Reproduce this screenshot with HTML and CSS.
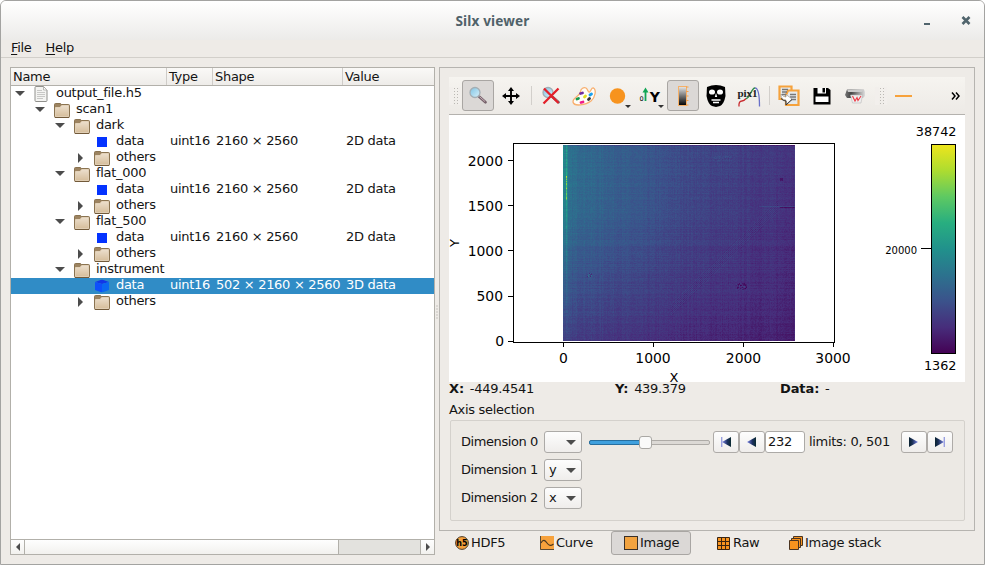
FILE: index.html
```html
<!DOCTYPE html>
<html lang="en">
<head>
<meta charset="utf-8">
<title>Silx viewer</title>
<link rel="stylesheet" href="styles.css">
</head>
<body>
<svg class="defs" width="0" height="0" aria-hidden="true">
  <defs>
    <linearGradient id="gFolder" x1="0" y1="0" x2="0" y2="1"><stop offset="0" stop-color="#ecdfcd"/><stop offset="1" stop-color="#d6be9c"/></linearGradient>
    <linearGradient id="gBar" x1="0" y1="0" x2="0" y2="1"><stop offset="0" stop-color="#e8e8e8"/><stop offset="1" stop-color="#000"/></linearGradient>
    <linearGradient id="gLens" x1="0" y1="0" x2="1" y2="1"><stop offset="0" stop-color="#7fc4e4"/><stop offset="1" stop-color="#d8f0fa"/></linearGradient>
    <linearGradient id="gPrint" x1="0" y1="0" x2="1" y2="0"><stop offset="0" stop-color="#777"/><stop offset=".3" stop-color="#444"/><stop offset="1" stop-color="#ddd"/></linearGradient>
    <linearGradient id="gTri" x1="0" y1="0" x2="1" y2="0"><stop offset="0" stop-color="#0a2230"/><stop offset=".35" stop-color="#1a2f55"/><stop offset="1" stop-color="#7a84ea"/></linearGradient>
    <linearGradient id="gTri2" x1="1" y1="0" x2="0" y2="0"><stop offset="0" stop-color="#0a2a30"/><stop offset=".4" stop-color="#1c3160"/><stop offset="1" stop-color="#8088ec"/></linearGradient>
    <linearGradient id="gViridis" x1="0" y1="0" x2="0" y2="1">
      <stop offset="0" stop-color="#efe51c"/><stop offset=".125" stop-color="#addc30"/><stop offset=".25" stop-color="#5ec962"/><stop offset=".375" stop-color="#28ae80"/><stop offset=".5" stop-color="#21918c"/><stop offset=".625" stop-color="#2c728e"/><stop offset=".75" stop-color="#3b528b"/><stop offset=".875" stop-color="#472d7b"/><stop offset="1" stop-color="#440154"/>
    </linearGradient>
    <symbol id="folder" viewBox="0 0 16 16">
      <path d="M.5 13.500V1.500Q.5.500 1.500.500H6Q7 .500 7.200 1.500H14.500Q15.500 1.500 15.500 2.500V13.500Q15.500 14.500 14.500 14.500H1.500Q.5 14.500.5 13.500Z" fill="#9c8360" stroke="#8a7350"/>
      <path d="M1.500 13.500V4.500H6L7.700 2.500H14.500V13.500Z" fill="url(#gFolder)" stroke="#ead9c2" stroke-width=".8"/>
      <path d="M1 14.500H15" stroke="#725a3a"/>
    </symbol>
    <symbol id="file" viewBox="0 0 14 16">
      <path d="M1 1.500Q1 .500 2 .500H9.500L13 4V14.500Q13 15.500 12 15.500H2Q1 15.500 1 14.500Z" fill="#f4f4f2" stroke="#90908c"/>
      <path d="M9.500 1V4H13" fill="#fff" stroke="#a8a8a4" stroke-width=".8"/>
      <path d="M3 4.500H8M3 6.500H11M3 8.500H11M3 10.500H11M3 12.500H9" stroke="#c8c8c6"/>
    </symbol>
    <symbol id="cube" viewBox="0 0 14 13">
      <path d="M0 2.500L7 0L14 2.500L7 4.500Z" fill="#1236e8"/><path d="M0 2.500L7 4.500V13L0 10.500Z" fill="#0e50fa"/><path d="M14 2.500L7 4.500V13L14 10.500Z" fill="#0a68f2"/>
    </symbol>
    <symbol id="lens" viewBox="0 0 20 20">
      <path d="M11 10.500L17.500 16.200" stroke="#77636c" stroke-width="2.800" stroke-linecap="round"/><path d="M11.500 10.700L17 15.500" stroke="#c5aeb6" stroke-width="1"/>
      <circle cx="7" cy="6.500" r="5" fill="url(#gLens)" stroke="#a4aeb4" stroke-width="1.300"/>
    </symbol>
    <symbol id="prev" viewBox="0 0 9 10"><path d="M9 0V10L0 5Z" fill="url(#gTri2)"/></symbol>
    <symbol id="next" viewBox="0 0 9 10"><path d="M0 0V10L9 5Z" fill="url(#gTri)"/></symbol>
  </defs>
</svg>
<div class="window">
  <header class="titlebar">
    <span class="title">Silx viewer</span>
    <svg class="winbtns" width="50" height="12" viewBox="0 0 50 12"><path d="M2 9H8" stroke="#50646c" stroke-width="2"/><path d="M40.500 2L47.500 9M47.500 2L40.500 9" stroke="#50646c" stroke-width="2.600"/></svg>
  </header>
  <nav class="menu"><span><u>F</u>ile</span><span><u>H</u>elp</span></nav>
  <main class="main">
    <section class="tree">
      <div class="cols head"><span>Name</span><span>Type</span><span>Shape</span><span>Value</span></div>
      <div class="rows">
        <div class="cols"><span class="name l0"><i class="down"></i><svg class="ico"><use href="#file" width="14" height="16" x="0"/></svg><b>output_file.h5</b></span></div>
        <div class="cols"><span class="name l1"><i class="down"></i><svg class="ico"><use href="#folder" width="16" height="16" y="1"/></svg><b>scan1</b></span></div>
        <div class="cols"><span class="name l2"><i class="down"></i><svg class="ico"><use href="#folder" width="16" height="16" y="1"/></svg><b>dark</b></span></div>
        <div class="cols"><span class="name l3"><i></i><svg class="ico"><rect x="3" y="3" width="10" height="10" fill="#0433ff"/></svg><b>data</b></span><span>uint16</span><span>2160 × 2560</span><span>2D data</span></div>
        <div class="cols"><span class="name l3"><i class="right"></i><svg class="ico"><use href="#folder" width="16" height="16" y="1"/></svg><b>others</b></span></div>
        <div class="cols"><span class="name l2"><i class="down"></i><svg class="ico"><use href="#folder" width="16" height="16" y="1"/></svg><b>flat_000</b></span></div>
        <div class="cols"><span class="name l3"><i></i><svg class="ico"><rect x="3" y="3" width="10" height="10" fill="#0433ff"/></svg><b>data</b></span><span>uint16</span><span>2160 × 2560</span><span>2D data</span></div>
        <div class="cols"><span class="name l3"><i class="right"></i><svg class="ico"><use href="#folder" width="16" height="16" y="1"/></svg><b>others</b></span></div>
        <div class="cols"><span class="name l2"><i class="down"></i><svg class="ico"><use href="#folder" width="16" height="16" y="1"/></svg><b>flat_500</b></span></div>
        <div class="cols"><span class="name l3"><i></i><svg class="ico"><rect x="3" y="3" width="10" height="10" fill="#0433ff"/></svg><b>data</b></span><span>uint16</span><span>2160 × 2560</span><span>2D data</span></div>
        <div class="cols"><span class="name l3"><i class="right"></i><svg class="ico"><use href="#folder" width="16" height="16" y="1"/></svg><b>others</b></span></div>
        <div class="cols"><span class="name l2"><i class="down"></i><svg class="ico"><use href="#folder" width="16" height="16" y="1"/></svg><b>instrument</b></span></div>
        <div class="cols selected"><span class="name l3"><i></i><svg class="ico"><use href="#cube" width="14" height="13" x="1" y="1.500"/></svg><b>data</b></span><span>uint16</span><span>502 × 2160 × 2560</span><span>3D data</span></div>
        <div class="cols"><span class="name l3"><i class="right"></i><svg class="ico"><use href="#folder" width="16" height="16" y="1"/></svg><b>others</b></span></div>
      </div>
      <div class="scrollbar"><span class="sbtn"><i class="left"></i></span><span class="thumb"></span><span class="track"></span><span class="sbtn"><i class="right"></i></span></div>
    </section>
    <div class="splitter"></div>
    <section class="side">
      <div class="panel">
        <div class="toolbar">
          <span class="handle"></span>
          <span class="tool on"><svg width="20" height="20"><use href="#lens"/></svg></span>
          <span class="tool"><svg width="20" height="20" viewBox="0 0 20 20"><path d="M10 3V17M3 10H17" stroke="#000" stroke-width="1.900"/><path d="M10 1L13 5H7ZM10 19L13 15H7ZM1 10L5 7V13ZM19 10L15 7V13Z"/></svg></span>
          <span class="sep"></span>
          <span class="tool"><svg width="20" height="20" viewBox="0 0 20 20"><use href="#lens"/><path d="M3 2.500L17.500 17M17.500 2.500L2.500 17.500" stroke="#e3202a" stroke-width="2.300"/></svg></span>
          <span class="tool"><svg width="26" height="22" viewBox="0 0 26 22"><path d="M9.500 7C9.500 3.500 13 2 15 3C17.500 4.500 16.500 7.500 18.500 7C20.500 6 20 2.500 22.500 3C25.500 5 24.500 12 20 16C15 20 3 22 2 17C1.500 12.500 8 12 9.500 7Z" fill="#fffdf8" stroke="#f8b070" stroke-width="1.300"/><g stroke-width="2.800" stroke-linecap="round"><path d="M9.500 8.500L11.500 8" stroke="#6e2da0"/><path d="M13.500 12L14.500 11" stroke="#e0e020"/><path d="M19 10L20.500 9" stroke="#1aa0ee"/><path d="M6 14L7.500 13.500" stroke="#169b50"/><path d="M17.500 14.500L18.500 13.500" stroke="#333"/><path d="M10 17.500L12 17" stroke="#ee1c8c"/></g></svg></span>
          <span class="tool drop"><svg width="20" height="20"><circle cx="10.500" cy="10" r="7.700" fill="#f7931e"/></svg></span>
          <span class="tool drop"><svg width="26" height="20" viewBox="0 0 26 20"><path d="M8.500 15V5" stroke="#12a555" stroke-width="1.800"/><path d="M5.500 6.500L8.500 1.500L11.500 6.500Z" fill="#12a555"/><text x="2.500" y="15" font-size="6.500">0</text><text x="12.700" y="15.500" font-size="14" font-weight="bold">Y</text></svg></span>
          <span class="tool on"><svg width="20" height="24" viewBox="0 0 20 24"><rect x="5.500" y="2.500" width="8" height="19" fill="url(#gBar)" stroke="#f5b068"/><path d="M13 3H15.500M13 7.500H15.500M13 12H15.500M13 16.500H15.500M13 21H15.500" stroke="#f5a04a"/></svg></span>
          <span class="tool"><svg width="22" height="24" viewBox="0 0 22 24"><path d="M2 3Q11-1 20 3L20.500 12Q19 20 15 22L11 23L7 22Q3 20 1.500 12Z"/><g fill="#fff"><ellipse cx="7" cy="8" rx="3" ry="2.600"/><ellipse cx="15" cy="8" rx="3" ry="2.600"/><path d="M9.800 13L11 9L12.200 13Z"/></g><path d="M6.500 16H15.500M8 18.500H14" stroke="#fff" stroke-width="1.500"/></svg></span>
          <span class="tool"><svg width="26" height="24" viewBox="0 0 26 24"><g fill="none" stroke-width="1.300"><path d="M3 22.500Q2.500 17 6 17Q8 17 10 14.500" stroke="#c8282c"/><path d="M10 14.500C14 15 15 4 19 4" stroke="#2c8a48"/><path d="M19 4C23 4 23.500 14 23.500 22.500" stroke="#6870c8"/></g><text class="serif" x="1.500" y="13" font-size="11" font-weight="bold" fill="#222" textLength="20">pix1</text></svg></span>
          <span class="sep"></span>
          <span class="tool"><svg width="22" height="22" viewBox="0 0 22 22"><g fill="#e6eaec" stroke="#f5a23c" stroke-width="2.200"><path d="M1.500 1.500H13.500V14H1.500Z"/><path d="M10 5.500H20.500V20H8V10Z"/></g><path d="M4 4.500H10M4 7H9M4 9.500H8M12 9.500H18M12 12H18M13 14.500H18" stroke="#777" stroke-width="1.300"/><path d="M3 9Q3 15 8 15V19.500L14 14L8 9.500V12Q5 12 3 9Z" fill="#fff" stroke="#888" stroke-width=".6"/><path d="M3 13.500Q5 16 8 16V20L14 14.500" fill="none" stroke="#333"/></svg></span>
          <span class="tool"><svg width="18" height="18" viewBox="0 0 18 18"><path d="M.5 1H15L17.500 3V17.500H.5Z"/><path d="M4.500 1H13V6.500H4.500ZM2.500 9.500H15.500V15H2.500Z" fill="#fff"/><path d="M9.500 1H12V5.500H9.500Z"/></svg></span>
          <span class="tool"><svg width="20" height="18" viewBox="0 0 20 18"><path d="M2 2.500H19L20 5V9L18 11H2L0 8Z" fill="url(#gPrint)"/><path d="M2 2.500H19L17 5H3Z" fill="#ccc"/><path d="M5.500 8H17.500L16 16H7.500Z" fill="#eee" stroke="#bbb" stroke-width=".6"/><path d="M7.500 9L10 14L12 10.500L13 13.500L16 9" fill="none" stroke="#ee3844" stroke-width="1.100"/></svg></span>
          <span class="handle second"></span>
          <span class="tool"><svg width="18" height="4"><rect y="1" width="17" height="2" fill="#f7a23c"/></svg></span>
          <svg class="more" width="10" height="8" viewBox="0 0 10 8"><path d="M1 .5L4 4L1 7.500M5 .5L8 4L5 7.500" fill="none" stroke="#000" stroke-width="1.500"/></svg>
        </div>
        <div class="plot">
          <svg class="axes" width="516" height="267" viewBox="449 115 516 267">
            <rect x="513.500" y="143.500" width="321" height="199" fill="none" stroke="#000"/>
            <path d="M508 160.500H513M508 205.500H513M508 250.500H513M508 296.500H513M508 341.500H513M563.500 343V347M653.500 343V347M743.500 343V347M833.500 343V347" stroke="#000"/>
            <g class="tick" text-anchor="end"><text x="503" y="166">2000</text><text x="503" y="211">1500</text><text x="503" y="256">1000</text><text x="503" y="301">500</text><text x="504" y="346">0</text></g>
            <g class="tick" text-anchor="middle"><text x="563.500" y="363">0</text><text x="653" y="363">1000</text><text x="743.500" y="363">2000</text><text x="833" y="363">3000</text><text x="674" y="381.700" font-size="13">X</text><text transform="translate(459 243) rotate(-90)" font-size="13">Y</text></g>
            <rect x="931.500" y="144.500" width="24" height="209" fill="url(#gViridis)" stroke="#000"/>
            <path d="M921 248.500H931" stroke="#000"/>
            <g class="clabel" text-anchor="end"><text x="956.500" y="136">38742</text><text x="956.500" y="370">1362</text></g>
            <text class="small" x="917" y="254" text-anchor="end">20000</text>
          </svg>
          <canvas class="heat" id="heat" width="232" height="196"></canvas>
        </div>
        <div class="stats"><span><strong>X:</strong> -449.4541</span><span><strong>Y:</strong> 439.379</span><span><strong>Data:</strong> -</span></div>
        <div class="axis-title">Axis selection</div>
        <div class="group">
          <div class="dim"><label>Dimension 0</label><span class="combo"><em></em><i class="down"></i></span>
            <span class="slider"><span class="fill"></span><span class="knob"></span></span>
            <span class="nav first"><svg width="10" height="10"><path d="M.7 0V10" stroke="#9aa0e0" stroke-width="1.400"/><use href="#prev" x="1" width="9" height="10"/></svg></span><span class="nav"><svg width="10" height="10"><use href="#prev" width="9" height="10"/></svg></span><span class="num">232</span><span class="limits">limits: 0, 501</span><span class="nav"><svg width="10" height="10"><use href="#next" width="9" height="10"/></svg></span><span class="nav"><svg width="10" height="10"><use href="#next" width="9" height="10"/><path d="M9.300 0V10" stroke="#9aa0e0" stroke-width="1.400"/></svg></span>
          </div>
          <div class="dim"><label>Dimension 1</label><span class="combo"><em>y</em><i class="down"></i></span></div>
          <div class="dim"><label>Dimension 2</label><span class="combo"><em>x</em><i class="down"></i></span></div>
        </div>
      </div>
      <div class="tabs">
        <span class="tab t1"><svg width="14" height="14" viewBox="0 0 14 14"><circle cx="7" cy="7" r="6.400" fill="#f5a03a" stroke="#4a3c2c"/><text x="7" y="10" font-size="8" font-weight="bold" text-anchor="middle">h5</text></svg>HDF5</span>
        <span class="tab t2"><svg width="14" height="14" viewBox="0 0 14 14"><rect width="14" height="14" fill="#f7a23c"/><path d="M.5 0V13.500H14" fill="none" stroke="#5a4a34"/><path d="M1 7C3 3 5 4 7 7S11 10 13.500 8" fill="none" stroke="#4a3820" stroke-width="1.100"/></svg>Curve</span>
        <span class="tab t3"><svg width="14" height="14" viewBox="0 0 14 14"><rect x=".5" y=".5" width="13" height="13" fill="#f2a340" stroke="#3a3028"/></svg>Image</span>
        <span class="tab t4"><svg width="14" height="14" viewBox="0 0 14 14"><path d="M.5 1.500H12.500V13.500H.5ZM4.500 1.500V13.500M8.500 1.500V13.500M.5 5.500H12.500M.5 9.500H12.500" fill="#f7931e" stroke="#3a2410"/></svg>Raw</span>
        <span class="tab t5"><svg width="14" height="14" viewBox="0 0 14 14"><g fill="#f7931e" stroke="#4a3420"><path d="M4.500.500H13.500V9.500H4.500Z"/><path d="M2.500 2.500H11.500V11.500H2.500Z"/><path d="M.5 4.500H9.500V13.500H.5Z"/></g></svg>Image stack</span>
      </div>
    </section>
  </main>
</div>
<script src="app.js"></script>
</body>
</html>
```
FILE: styles.css
```css
* { box-sizing: border-box; }
body { margin: 0; background: #fff; color: #141414; font: 13px/16px "DejaVu Sans", sans-serif; letter-spacing: -0.3px; }
b, em, i { font-weight: normal; font-style: normal; }
svg { display: block; flex: none; letter-spacing: 0; }
.defs { position: absolute; }
.window { width: 985px; height: 565px; border: 1px solid #a3a3a1; border-radius: 6px 6px 0 0; background: #eeebe7; display: flex; flex-direction: column; overflow: hidden; }
.titlebar { height: 39px; flex: none; background: linear-gradient(#fff, #ecebe9); display: grid; grid-template-columns: 1fr auto 1fr; align-items: center; color: #50626a; }
.title { grid-column: 2; font: bold 13.6px/16px "Noto Sans", sans-serif; letter-spacing: 0.15px; }
.winbtns { justify-self: end; margin-right: 12px; }
.menu { height: 18px; flex: none; border-bottom: 1px solid #d2cfca; display: flex; gap: 14px; padding-left: 10px; }
.menu u { text-underline-offset: 2px; }
.main { display: flex; padding: 9px; flex: 1; min-height: 0; }
.tree { width: 425px; border: 1px solid #b2b0aa; background: #fff; display: flex; flex-direction: column; }
.cols { display: grid; grid-template-columns: 156px 46px 130px 91px; height: 16px; line-height: 14px; white-space: nowrap; }
.cols > span { padding-left: 3px; }
.head { height: 18px; border-bottom: 1px solid #b2b0aa; background: linear-gradient(#faf9f7, #eeece9); line-height: 17px; }
.head > span:nth-child(n) { padding-left: 2px; border-right: 1px solid #cfccc8; }
.head > span:last-child { border: 0; }
.rows { flex: 1; }
.cols > .name { display: flex; padding-left: 5px; }
.cols > .l1 { padding-left: 25px; }
.cols > .l2 { padding-left: 45px; }
.cols > .l3 { padding-left: 65px; }
.name > i { width: 18px; height: 14px; display: flex; align-items: center; justify-content: flex-start; }
.name > i.right { height: 16px; }
.ico { width: 16px; height: 16px; overflow: visible; }
.name > b { margin-left: 6px; }
i.down::before, i.right::before, i.left::before { content: ""; display: block; border: 5px solid transparent; }
i.down::before { border-top-color: #4c4c4c; border-bottom: 0; }
i.right::before { border-left-color: #4c4c4c; border-right: 0; margin-left: 2px; }
i.left::before { border-right-color: #4c4c4c; border-left: 0; }
.name > i.down::before { margin-left: -1px; }
.selected { background: #308cc6; color: #fff; }
.scrollbar { height: 15px; display: flex; border-top: 1px solid #b2b0aa; background: linear-gradient(#fefefe, #f2f1ee); }
.sbtn { width: 14px; display: grid; place-items: center; border-right: 1px solid #b2b0aa; }
.sbtn i::before { border-width: 4px; }
.sbtn i.left::before { border-left: 0; }
.sbtn i.right::before { border-right: 0; margin: 0; }
.sbtn:last-child { border: 0; width: 13px; }
.thumb { flex: 1; border-right: 1px solid #b2b0aa; }
.track { width: 82px; background: #e3e2de; border-right: 1px solid #b2b0aa; }
.splitter { width: 4px; background: radial-gradient(circle, #c5c2be 0.7px, transparent 1px) center / 4px 3px repeat-y content-box; padding: 237px 0 235px; }
.side { width: 536px; display: flex; flex-direction: column; }
.panel { height: 464px; flex: none; border: 1px solid #b6b4b0; padding: 9px 9px 0; display: flex; flex-direction: column; }
.toolbar { height: 38px; flex: none; display: flex; gap: 1px; align-items: center; background: linear-gradient(#f6f4f0, #edeae6); border-bottom: 1px solid #b4b2ae; }
.tool { width: 32px; height: 31px; display: grid; place-items: center; position: relative; border: 1px solid transparent; border-radius: 3px; }
.on { background: #dbd8d6; border-color: #a9a6a3; }
.drop::after { content: ""; position: absolute; right: 1px; bottom: 2px; border: 3px solid transparent; border-top-color: #333; border-bottom: 0; }
.handle { width: 12px; height: 18px; background: radial-gradient(circle, #bbb8b4 0.7px, transparent 1px) 0 0 / 3px 3px; border-left: 4px solid #f2efec; border-right: 3px solid #f2efec; }
.handle.second { margin-left: 3px; }
.sep { width: 6px; height: 19px; background: linear-gradient(#d2cfcb, #d2cfcb) 3px 0 / 1px 100% no-repeat; }
.more { margin-left: 30px; }
.serif { font-family: "Liberation Serif", serif; }
.plot { height: 267px; flex: none; background: #fff; position: relative; }
.axes { overflow: visible; }
.heat { position: absolute; left: 114px; top: 30px; }
.tick { font-size: 13.9px; }
.clabel { font-size: 12.8px; }
.small { font-size: 10px; }
.stats { display: grid; grid-template-columns: 166px 165px 1fr; height: 16px; flex: none; line-height: 14px; }
.stats strong { margin-right: 2px; letter-spacing: -0.1px; }
.axis-title { height: 22px; flex: none; padding-top: 4px; }
.group { height: 101px; flex: none; margin-left: 1px; border: 1px solid #d4d1cc; border-radius: 2px; background: #ece9e4; padding: 10px 10px 0; display: flex; flex-direction: column; gap: 6px; }
.dim { height: 22px; display: flex; align-items: center; white-space: nowrap; }
.dim label { width: 83px; letter-spacing: -0.42px; }
.combo { width: 38px; height: 22px; border: 1px solid #acaaa7; border-radius: 3px; background: linear-gradient(#fdfdfd, #efedeb); display: flex; justify-content: space-between; align-items: center; padding: 0 5px 0 4px; }
.slider { width: 121px; margin-left: 7px; height: 5px; border: 1px solid #aeaba7; border-radius: 2px; background: #dcd9d5; position: relative; }
.fill { display: block; width: 52px; height: 5px; margin: -1px; background: #3fa0de; border: 1px solid #276f9f; border-radius: 2px; }
.knob { position: absolute; left: 49px; top: -5px; width: 13px; height: 13px; border: 1px solid #aaa8a4; border-radius: 3px; background: #fafaf9; }
.nav { width: 26px; height: 22px; border: 1px solid #aeaba8; border-radius: 3px; background: linear-gradient(#fdfdfd, #efedeb); display: grid; place-items: center; }
.first { margin-left: 3px; }
.num { width: 40px; height: 22px; border: 1px solid #acaaa7; border-radius: 3px; background: #fff; padding: 2px 2px; }
.limits { width: 96px; padding-left: 4px; }
.tabs { height: 24px; display: flex; }
.tab { display: flex; align-items: center; gap: 2px; height: 24px; white-space: nowrap; border: 1px solid transparent; }
.t1 { width: 85px; padding-left: 15px; }
.t2 { width: 87px; padding-left: 15px; }
.t3 { width: 80px; padding-left: 12px; background: #dbd8d6; border-color: #a9a6a3; border-radius: 3px; }
.t4 { width: 72px; padding-left: 25px; }
.t5 { padding-left: 25px; }
```
FILE: app.js
```javascript
// Detector frame drawn with the viridis colormap.
const stops = [[68,1,84],[71,45,123],[59,82,139],[44,114,142],[33,145,140],[40,174,128],[94,201,98],[173,220,48],[253,231,37]];
function viridis(t) {
  t = Math.max(0, Math.min(0.999, t)) * 8;
  const i = Math.floor(t), f = t - i;
  return stops[i].map((c, k) => c + (stops[i + 1][k] - c) * f);
}
let seed = 7;
function rnd() { seed = (seed * 16807) % 2147483647; return seed / 2147483647 - 0.5; }
const canvas = document.getElementById("heat");
const ctx = canvas.getContext("2d");
const W = canvas.width, H = canvas.height;
const rowNoise = Array.from({ length: H }, rnd), colNoise = Array.from({ length: W }, rnd);
const edgeNoise = Array.from({ length: H }, rnd);
const img = ctx.createImageData(W, H);
for (let y = 0; y < H; y++) {
  for (let x = 0; x < W; x++) {
    const u = x / W, v = y / H;
    let t = 0.085 + 0.27 * Math.exp(-u * 1.3) * (1 - 0.5 * v * v) - 0.035 * v + 0.035 * Math.exp(-((v - 0.3) ** 2) * 12) * (1 - u);
    if (x > 97 && y < 110) t -= 0.006;
    t += rowNoise[y] * 0.03 + colNoise[x] * 0.03 + rnd() * 0.04;
    if (x < 1) t += 0.1 * (1 - v);
    if (x >= 1 && x < 5) t += (0.23 - Math.abs(v - 0.3) * 0.2 + edgeNoise[y] * 0.14) * (x === 3 ? 1 : 0.45) * (1 - v * 0.8);
    if (x === 3 && y > 30 && y < 55) t += 0.2 + rnd() * 0.2;
    const d = Math.abs(y - (165 - (x - 107) * 0.97));
    if (x > 107 && x < 215 && d < 6) t += ((x + y) % 2 ? 0.03 : -0.025);
    if (y === 62 && x > 216) t -= 0.1;
    if (y === 61 && x > 195) t += 0.06;
    if (Math.hypot((x - 178) / 6, (y - 141) / 4) < 1) t += rnd() * 0.18 - 0.03;
    if (Math.hypot((x - 26) / 3, (y - 130) / 3) < 1) t += rnd() * 0.3;
    if (Math.hypot(x - 218, y - 34) < 2) t -= 0.08;
    if (x > 149 && x < 169 && Math.abs(y - 13) < 3) t += rnd() * 0.07 + 0.02;
    if (y === 0) t -= 0.07;
    const c = viridis(t), o = (y * W + x) * 4;
    img.data[o] = c[0]; img.data[o + 1] = c[1]; img.data[o + 2] = c[2]; img.data[o + 3] = 255;
  }
}
ctx.putImageData(img, 0, 0);
```
